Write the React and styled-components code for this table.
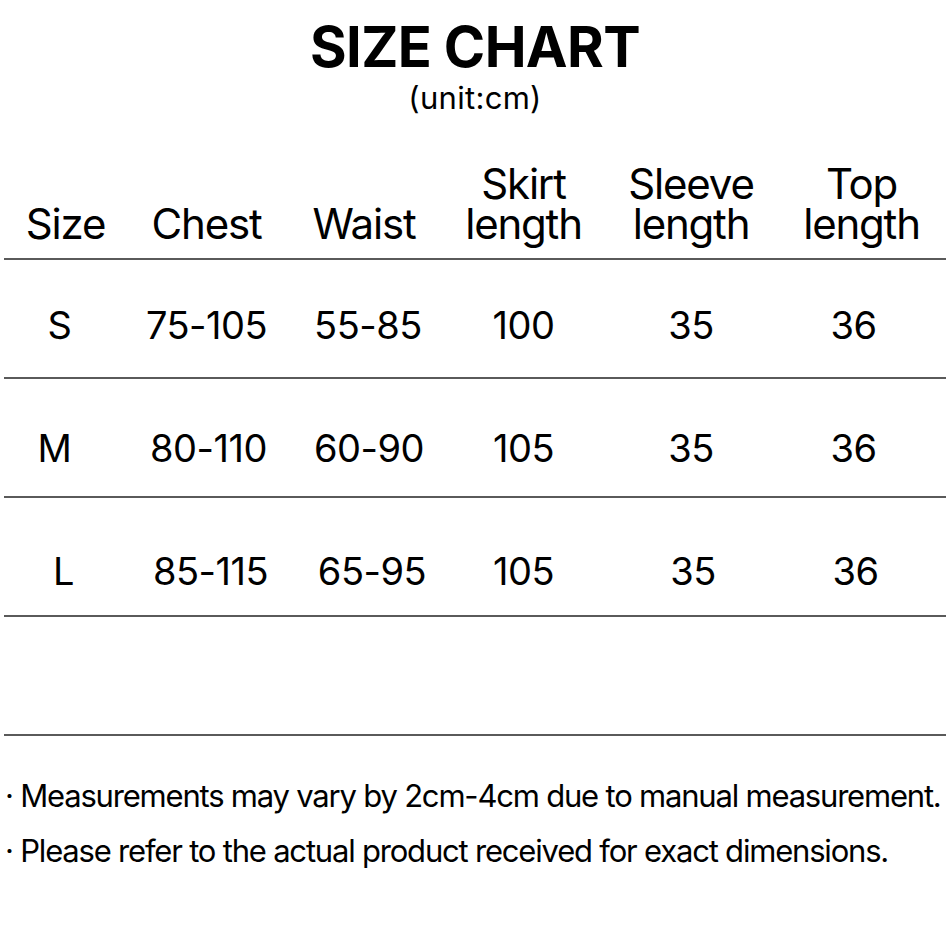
import React from 'react';
import styled, { createGlobalStyle } from 'styled-components';

const GlobalStyle = createGlobalStyle`
  html, body {
    margin: 0;
    padding: 0;
    background: #fff;
  }
  body {
    font-family: Inter, "Noto Sans", sans-serif;
    color: #000;
  }
`;

const Page = styled.div`
  width: 950px;
  height: 950px;
  display: flex;
  flex-direction: column;
  align-items: center;
  overflow: hidden;
`;

const Title = styled.h1`
  margin: 15px 0 0;
  font-size: 56px;
  font-weight: 700;
  line-height: 64px;
  letter-spacing: -0.6px;
`;

const Unit = styled.div`
  margin-top: 1px;
  font-size: 31px;
  line-height: 36px;
  letter-spacing: 0.3px;
`;

const Table = styled.div`
  margin-top: 48px;
  width: 942px;
  display: grid;
  grid-template-columns: 123px 159px 156px 163px 172px 169px;
`;

const Head = styled.div`
  display: flex;
  align-items: flex-end;
  justify-content: center;
  text-align: center;
  font-size: 42px;
  line-height: 40px;
  letter-spacing: -1.2px;
  padding-bottom: 14px;
  border-bottom: 2px solid #5a5a5a;
`;

const Cell = styled.div`
  height: 119px;
  display: flex;
  align-items: center;
  justify-content: center;
  padding-top: ${p => p.$shift || 0}px;
  box-sizing: border-box;
  font-size: 38px;
  letter-spacing: -0.5px;
  border-bottom: 2px solid #5a5a5a;
`;

const Value = styled.span`
  transform: translateX(${p => p.$dx || 0}px);
`;

const Notes = styled.div`
  margin-top: 42px;
  width: 940px;
  display: flex;
  flex-direction: column;
  gap: 19px;
`;

const Note = styled.div`
  font-size: 31px;
  line-height: 36px;
  letter-spacing: -1.2px;
  white-space: nowrap;
`;

const headers = ['Size', 'Chest', 'Waist', ['Skirt', 'length'], ['Sleeve', 'length'], ['Top', 'length']];

const rows = [
  { shift: 13, cells: [['S', -6], ['75-105', 0], ['55-85', 4], ['100', 0], ['35', 0], ['36', -8]] },
  { shift: 21, cells: [['M', -11], ['80-110', 2], ['60-90', 5], ['105', 0], ['35', 0], ['36', -8]] },
  { shift: 29, cells: [['L', -2], ['85-115', 4], ['65-95', 8], ['105', 0], ['35', 2], ['36', -6]] },
];

export default function App() {
  return (
    <>
      <GlobalStyle />
      <Page>
        <Title>SIZE CHART</Title>
        <Unit>(unit:cm)</Unit>
        <Table>
          {headers.map((h, i) => (
            <Head key={i}>
              {Array.isArray(h) ? (
                <span>{h[0]}<br />{h[1]}</span>
              ) : h}
            </Head>
          ))}
          {rows.map((r, ri) =>
            r.cells.map(([text, dx], ci) => (
              <Cell key={ri + '-' + ci} $shift={r.shift}>
                <Value $dx={dx}>{text}</Value>
              </Cell>
            ))
          )}
          {headers.map((h, i) => <Cell key={'empty' + i} />)}
        </Table>
        <Notes>
          <Note>· Measurements may vary by 2cm-4cm due to manual measurement.</Note>
          <Note>· Please refer to the actual product received for exact dimensions.</Note>
        </Notes>
      </Page>
    </>
  );
}
